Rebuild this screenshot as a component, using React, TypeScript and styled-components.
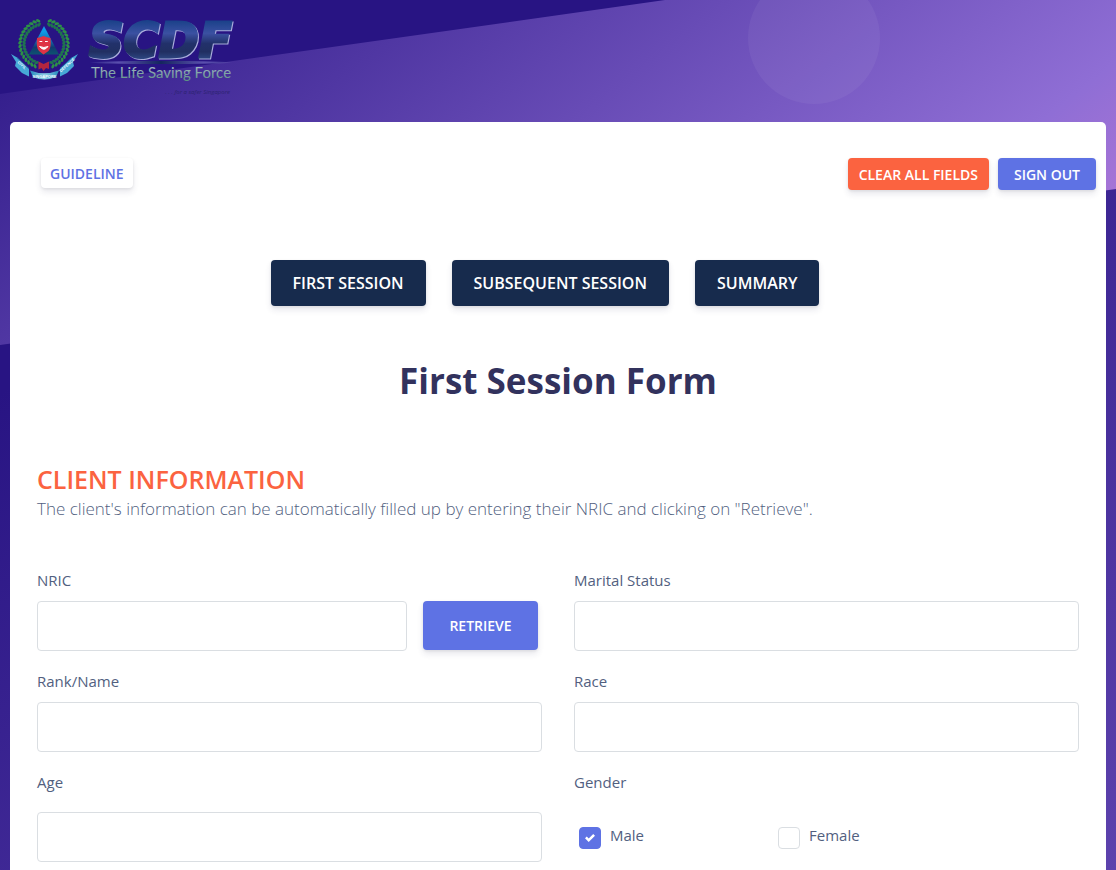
import React, { useState } from "react";
import styled, { createGlobalStyle } from "styled-components";

const GlobalStyle = createGlobalStyle`
  *, *::before, *::after { box-sizing: border-box; }
  body {
    margin: 0;
    font-family: "Open Sans", "Noto Sans", sans-serif;
    font-size: 16px;
    line-height: 24px;
    color: #525f7f;
  }
`;

const Page = styled.div`
  position: relative;
  isolation: isolate;
  display: flex;
  flex-direction: column;
  min-height: 100vh;
  background: linear-gradient(150deg, #281483 340px, #8f6ed5 2240px);
`;

const Band = styled.div`
  position: absolute;
  inset: 0 0 auto 0;
  z-index: -1;
  height: 345px;
  overflow: hidden;
  background: linear-gradient(142deg, #281483 -20px, #8f6ed5 736px, #d782d9 1061px);
  clip-path: polygon(0 94px, 665px 0, 100% 0, 100% 189px, 0 100%);
`;

const Corner = styled.div`
  position: absolute;
  inset: 0 0 auto 0;
  z-index: -2;
  height: 120px;
  background: #281483;
`;

const Bubble = styled.span`
  position: absolute;
  top: -28px;
  left: 67%;
  width: 132px;
  height: 132px;
  border-radius: 50%;
  background: rgba(255, 255, 255, 0.05);
`;

const Header = styled.header`
  height: 122px;
`;

const HomeLink = styled.a`
  display: block;
  width: 240px;
  svg { display: block; }
`;

const Card = styled.main`
  flex: 1;
  margin: 0 10px;
  padding-top: 36px;
  padding-bottom: 8px;
  background: #fff;
  border-radius: 5px 5px 0 0;
`;

const Toolbar = styled.div`
  display: flex;
  align-items: flex-start;
  gap: 9px;
  padding: 0 10px 0 31px;
`;

const Spacer = styled.div`
  flex: 1;
`;

const tones = {
  primary: ["#5e72e4", "#fff"],
  warning: ["#fb6340", "#fff"],
  dark: ["#172b4d", "#fff"],
  plain: ["#fff", "#5e72e4"],
};

const sizes = {
  xs: ["30px", "9px", "14px"],
  sm: ["32px", "11px", "14px"],
  md: ["49px", "26px", "14px"],
  lg: ["46px", "22px", "16px"],
};

const Button = styled.button<{ $tone: keyof typeof tones; $size: keyof typeof sizes; $width?: string }>`
  flex: none;
  width: ${(p) => p.$width ?? "auto"};
  height: ${(p) => sizes[p.$size][0]};
  padding: 0 ${(p) => sizes[p.$size][1]};
  border: 0;
  border-radius: 4px;
  background: ${(p) => tones[p.$tone][0]};
  color: ${(p) => tones[p.$tone][1]};
  font-family: inherit;
  font-size: ${(p) => sizes[p.$size][2]};
  font-weight: 600;
  text-transform: uppercase;
  white-space: nowrap;
  cursor: pointer;
  box-shadow: 0 4px 6px rgba(50, 50, 93, 0.11), 0 1px 3px rgba(0, 0, 0, 0.08);
`;

const Sessions = styled.nav`
  display: flex;
  justify-content: center;
  gap: 26px;
  margin-top: 70px;
  padding-right: 26px;
`;

const Title = styled.h1`
  margin: 51px 0 0;
  color: #32325d;
  font-size: 35px;
  font-weight: 700;
  line-height: 48px;
  text-align: center;
`;

const Section = styled.section`
  padding: 0 27px;
  margin-top: 58px;
`;

const SectionTitle = styled.h2`
  margin: 0;
  color: #fb6340;
  font-size: 25px;
  font-weight: 600;
  line-height: 32px;
  text-transform: uppercase;
`;

const Lead = styled.p`
  margin: 0 0 45px;
  font-size: 17px;
  font-weight: 300;
  line-height: 28px;
`;

const Fields = styled.form`
  display: grid;
  grid-template-columns: 1fr 1fr;
  gap: 18px 32px;
`;

const Field = styled.div<{ $gap?: string }>`
  display: flex;
  flex-direction: column;
  gap: ${(p) => p.$gap ?? "9px"};
`;

const Label = styled.label`
  font-size: 15px;
  line-height: 24px;
`;

const Input = styled.input`
  flex: 1;
  width: 100%;
  min-width: 0;
  min-height: 50px;
  padding: 0 12px;
  border: 1px solid #dadee2;
  border-radius: 4px;
  background: #fff;
  color: #525f7f;
  font: inherit;
`;

const Inline = styled.div`
  display: flex;
  gap: 16px;
  padding-right: 4px;
`;

const Group = styled.fieldset`
  min-width: 0;
  margin: 0;
  padding: 0;
  border: 0;
`;

const Legend = styled.legend`
  padding: 0;
  font-size: 15px;
  line-height: 24px;
`;

const Options = styled.div`
  display: flex;
  margin-top: 29px;
  padding-left: 5px;
`;

const Option = styled.label`
  display: flex;
  align-items: flex-end;
  gap: 9px;
  width: 199px;
  height: 26px;
  font-size: 15px;
`;

const Check = styled.input`
  appearance: none;
  width: 22px;
  height: 22px;
  margin: 0;
  border: 1px solid #dadee2;
  border-radius: 4px;
  background: #fff center / 10px 10px no-repeat;
  &:checked {
    border-color: #5e72e4;
    background-color: #5e72e4;
    background-image: url("data:image/svg+xml,%3Csvg xmlns='http://www.w3.org/2000/svg' viewBox='0 0 8 8'%3E%3Cpath fill='%23fff' d='M6.564.75l-3.59 3.612-1.538-1.55L0 4.26 2.974 7.25 8 2.193z'/%3E%3C/svg%3E");
  }
`;

const OptionText = styled.span`
  align-self: flex-start;
  line-height: 24px;
`;

function Wreath() {
  const parts: React.ReactNode[] = [];
  for (let deg = 14; deg <= 160; deg += 9) {
    const rad = (deg * Math.PI) / 180;
    for (const side of [-1, 1]) {
      for (const edge of [-1, 1]) {
        const r = 22 + edge * 2;
        const x = 44 + side * r * Math.sin(rad);
        const y = 44 - r * Math.cos(rad);
        parts.push(
          <ellipse
            key={`${deg}${side}${edge}`}
            cx={x}
            cy={y}
            rx="2.3"
            ry="1.4"
            fill={edge > 0 ? "#2c9147" : "#1f7350"}
            transform={`rotate(${side * (deg - edge * 38)} ${x} ${y})`}
          />
        );
      }
    }
  }
  return <g>{parts}</g>;
}

function Logo() {
  return (
    <svg width="240" height="100" viewBox="0 0 240 100" role="img" aria-label="SCDF">
      <defs>
        <linearGradient id="steel" gradientUnits="userSpaceOnUse" x1="0" y1="19" x2="0" y2="60">
          <stop offset="0" stopColor="#163f86" />
          <stop offset="0.35" stopColor="#3b51a2" />
          <stop offset="0.6" stopColor="#22316a" />
          <stop offset="0.8" stopColor="#212f62" />
          <stop offset="1" stopColor="#2f4a86" />
        </linearGradient>
        <linearGradient id="tri" x1="0" y1="0" x2="0" y2="1">
          <stop offset="0.2" stopColor="#109be6" />
          <stop offset="0.5" stopColor="#0f6fb5" />
          <stop offset="0.75" stopColor="#123a70" />
          <stop offset="1" stopColor="#0d5370" />
        </linearGradient>
        <linearGradient id="line" x1="0" y1="0" x2="1" y2="0">
          <stop offset="0" stopColor="#5b5fae" stopOpacity="0.1" />
          <stop offset="0.2" stopColor="#5b4fae" />
          <stop offset="0.5" stopColor="#15265f" />
          <stop offset="0.8" stopColor="#5b4fae" />
          <stop offset="1" stopColor="#7a78c0" stopOpacity="0.1" />
        </linearGradient>
        <linearGradient id="tag" x1="0" y1="0" x2="0" y2="1">
          <stop offset="0.2" stopColor="#a3b8c4" />
          <stop offset="1" stopColor="#5b9082" />
        </linearGradient>
        <linearGradient id="ribbon" x1="0" y1="0" x2="1" y2="0">
          <stop offset="0" stopColor="#2489bd" />
          <stop offset="0.5" stopColor="#8fd0e6" />
          <stop offset="1" stopColor="#2489bd" />
        </linearGradient>
      </defs>
      <Wreath />
      <path d="M44 26 L59 54.500 H29 Z" fill="url(#tri)" />
      <path d="M37 38 Q40 37.500 43.500 36 Q47 37.500 50.500 38 Q51.500 48 48.500 51 L43.500 54.500 L39 51 Q36 48 37 38Z" fill="#de3346" />
      <path d="M39.500 41.500 h2.800 M45 41.500 h2.800 M39.500 46.500 Q44 52 48 46.500 Q44 48.500 39.500 46.500" stroke="#fff" strokeWidth="1" fill="#fff" />
      <path d="M38.500 61.500 L43.500 64 L49 61.500 V69 L46 68 L43.500 71 L41.500 68 L38.500 69.500 Z" fill="#b3263f" />
      <path d="M11 54 L17 57.500 L29 68.500 L29 76.500 L22 73 L15 66 L16 62 Z" fill="#47a8d6" />
      <path d="M78 54 L72 57.500 L60 68.500 L60 76.500 L67 73 L74 66 L73 62 Z" fill="#47a8d6" />
      <path d="M17 57.500 L29 68.500 M72 57.500 L60 68.500" stroke="#1b5f98" strokeWidth="1" />
      <path d="M30 70.500 Q44 76 59 70.500 L56 77 Q44 82 33 77 Z" fill="url(#ribbon)" />
      <g fill="#f2fbff" fontFamily="Liberation Sans, sans-serif" fontWeight="700" fontSize="4" textAnchor="middle">
        <text x="44.500" y="77.500">SINGAPORE</text>
        <text x="22" y="66.500" transform="rotate(42 22 65)">CIVIL</text>
        <text x="67" y="66.500" transform="rotate(-42 67 65)">DEFENCE</text>
      </g>
      <g style={{ filter: "drop-shadow(1px 1px 0 #a9addb)" }}>
        <text x="89" y="57" fontFamily="DejaVu Sans, sans-serif" fontWeight="700" fontStyle="italic" fontSize="48" fill="url(#steel)" stroke="url(#steel)" strokeWidth="3">SCDF</text>
      </g>
      <ellipse cx="161" cy="62.500" rx="71" ry="1.500" fill="url(#line)" />
      <text x="91" y="78" fontFamily="Lato, sans-serif" fontSize="15" fill="url(#tag)">The Life Saving Force</text>
      <text x="230" y="94" textAnchor="end" fontFamily="Open Sans, sans-serif" fontStyle="italic" fontSize="6" fill="#2c2370">. . . for a safer Singapore</text>
    </svg>
  );
}

function TextField({ id, label, gap }: { id: string; label: string; gap?: string }) {
  return (
    <Field $gap={gap}>
      <Label htmlFor={id}>{label}</Label>
      <Input id={id} type="text" />
    </Field>
  );
}

export default function App() {
  const [gender, setGender] = useState("Male");
  return (
    <>
      <GlobalStyle />
      <Page>
        <Corner />
        <Band>
          <Bubble />
        </Band>
        <Header>
          <HomeLink href="#">
            <Logo />
          </HomeLink>
        </Header>
        <Card>
          <Toolbar>
            <Button $tone="plain" $size="xs">Guideline</Button>
            <Spacer />
            <Button $tone="warning" $size="sm">Clear all fields</Button>
            <Button $tone="primary" $size="sm" $width="98px">Sign out</Button>
          </Toolbar>
          <Sessions>
            <Button $tone="dark" $size="lg">First Session</Button>
            <Button $tone="dark" $size="lg">Subsequent Session</Button>
            <Button $tone="dark" $size="lg">Summary</Button>
          </Sessions>
          <Title>First Session Form</Title>
          <Section>
            <SectionTitle>Client Information</SectionTitle>
            <Lead>
              The client's information can be automatically filled up by entering their NRIC and clicking on "Retrieve".
            </Lead>
            <Fields onSubmit={(e) => e.preventDefault()}>
              <Field>
                <Label htmlFor="nric">NRIC</Label>
                <Inline>
                  <Input id="nric" type="text" />
                  <Button type="button" $tone="primary" $size="md" $width="115px">Retrieve</Button>
                </Inline>
              </Field>
              <TextField id="marital" label="Marital Status" />
              <TextField id="rank" label="Rank/Name" />
              <TextField id="race" label="Race" />
              <TextField id="age" label="Age" gap="18px" />
              <Group>
                <Legend>Gender</Legend>
                <Options>
                  {["Male", "Female"].map((g) => (
                    <Option key={g}>
                      <Check type="checkbox" checked={gender === g} onChange={() => setGender(g)} />
                      <OptionText>{g}</OptionText>
                    </Option>
                  ))}
                </Options>
              </Group>
            </Fields>
          </Section>
        </Card>
      </Page>
    </>
  );
}
